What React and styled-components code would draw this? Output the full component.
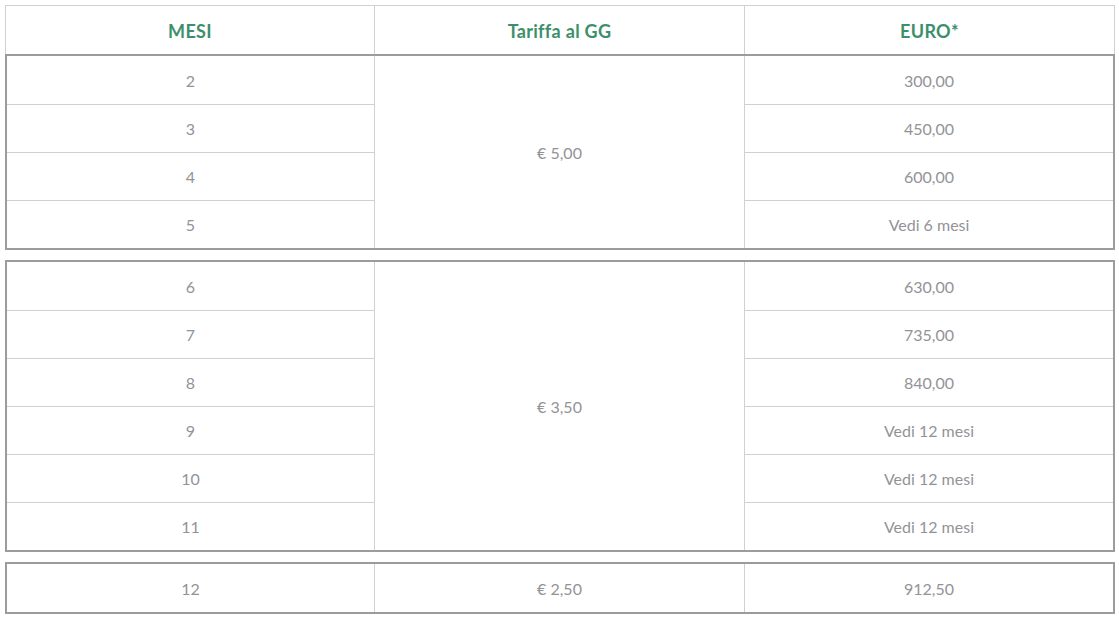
import React from 'react';
import styled, { createGlobalStyle } from 'styled-components';

const GlobalStyle = createGlobalStyle`
  html, body {
    margin: 0;
    padding: 0;
    background: #fff;
  }
  body {
    font-family: "Source Sans Pro", Lato, "Noto Sans", sans-serif;
  }
`;

const Page = styled.div`
  padding: 5px 4px 0 5px;
  width: 1110px;
`;

const Header = styled.div`
  display: grid;
  grid-template-columns: 368px 370px 1fr;
  border: 1px solid #d0d0d0;
  border-bottom: none;
  height: 48px;
`;

const HeadCell = styled.div`
  display: flex;
  align-items: center;
  justify-content: center;
  padding-top: 2px;
  color: #3d8f6c;
  font-weight: 700;
  font-size: 18px;
  letter-spacing: 0.3px;
  border-left: ${({ first }) => (first ? 'none' : '1px solid #d0d0d0')};
`;

const Group = styled.div`
  display: grid;
  grid-template-columns: 367px 370px 1fr;
  grid-template-rows: ${({ rows }) => `repeat(${rows}, 48px)`};
  border: 2px solid #9c9ca0;
  margin-bottom: ${({ last }) => (last ? '0' : '10px')};
`;

const Cell = styled.div`
  display: flex;
  align-items: center;
  justify-content: center;
  color: #939397;
  font-weight: 400;
  font-size: 16px;
  border-left: ${({ col }) => (col === 0 ? 'none' : '1px solid #d0d0d0')};
  border-top: ${({ top }) => (top ? 'none' : '1px solid #d0d0d0')};
  grid-column: ${({ col }) => col + 1};
  grid-row: ${({ row, span }) => (span ? `${row + 1} / span ${span}` : row + 1)};
`;

const groups = [
  {
    rate: '€ 5,00',
    rows: [
      ['2', '300,00'],
      ['3', '450,00'],
      ['4', '600,00'],
      ['5', 'Vedi 6 mesi'],
    ],
  },
  {
    rate: '€ 3,50',
    rows: [
      ['6', '630,00'],
      ['7', '735,00'],
      ['8', '840,00'],
      ['9', 'Vedi 12 mesi'],
      ['10', 'Vedi 12 mesi'],
      ['11', 'Vedi 12 mesi'],
    ],
  },
  {
    rate: '€ 2,50',
    rows: [['12', '912,50']],
  },
];

const App = () => {
  return (
    <>
      <GlobalStyle />
      <Page>
        <Header>
          <HeadCell first>MESI</HeadCell>
          <HeadCell>Tariffa al GG</HeadCell>
          <HeadCell>EURO*</HeadCell>
        </Header>
        {groups.map((g, gi) => (
          <Group key={gi} rows={g.rows.length} last={gi === groups.length - 1}>
            {g.rows.map(([m, eur], i) => (
              <React.Fragment key={m}>
                <Cell col={0} row={i} top={i === 0}>{m}</Cell>
                <Cell col={2} row={i} top={i === 0}>{eur}</Cell>
              </React.Fragment>
            ))}
            <Cell col={1} row={0} span={g.rows.length} top>{g.rate}</Cell>
          </Group>
        ))}
      </Page>
    </>
  );
};

export default App;
